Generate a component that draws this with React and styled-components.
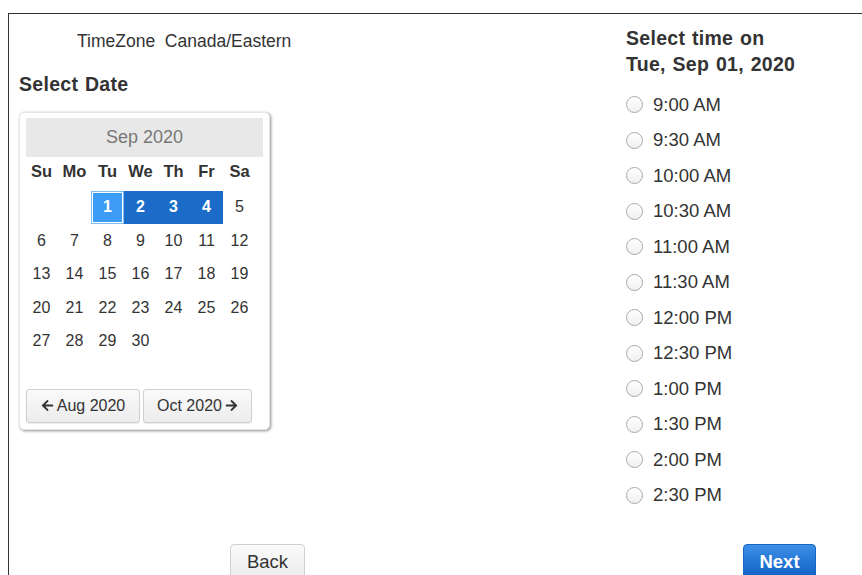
import React from 'react';
import styled, { createGlobalStyle } from 'styled-components';
import { FaArrowLeft, FaArrowRight } from 'react-icons/fa';

const GlobalStyle = createGlobalStyle`
  html, body {
    margin: 0;
    background: #fff;
    font-family: "Liberation Sans", Arial, sans-serif;
    color: #333;
  }
`;

const WEEKDAYS = ['Su', 'Mo', 'Tu', 'We', 'Th', 'Fr', 'Sa'];
const TIMES = [
  '9:00 AM', '9:30 AM', '10:00 AM', '10:30 AM', '11:00 AM', '11:30 AM',
  '12:00 PM', '12:30 PM', '1:00 PM', '1:30 PM', '2:00 PM', '2:30 PM',
];

// September 2020 starts on a Tuesday
const buildDays = () => {
  const cells = [null, null];
  for (let d = 1; d <= 30; d++) cells.push(d);
  return cells;
};

const App = () => {
  const days = buildDays();

  return (
    <>
      <GlobalStyle />
      <Frame>
        <Columns>
          <DateColumn>
            <TimeZone>TimeZone&nbsp;&nbsp;Canada/Eastern</TimeZone>
            <Heading>Select Date</Heading>
            <Calendar>
              <MonthBar>Sep 2020</MonthBar>
              <DayGrid>
                {WEEKDAYS.map(w => (
                  <WeekdayCell key={w}>{w}</WeekdayCell>
                ))}
                {days.map((d, i) => (
                  <DayCell
                    key={i}
                    current={d === 1}
                    available={d >= 2 && d <= 4}
                  >
                    {d}
                  </DayCell>
                ))}
              </DayGrid>
              <MonthNav>
                <NavButton>
                  <FaArrowLeft size={13} /> Aug 2020
                </NavButton>
                <NavButton>
                  Oct 2020 <FaArrowRight size={13} />
                </NavButton>
              </MonthNav>
            </Calendar>
          </DateColumn>

          <TimeColumn>
            <Heading tight>
              Select time on
              <br />
              Tue, Sep 01, 2020
            </Heading>
            <SlotList>
              {TIMES.map(t => (
                <Slot key={t}>
                  <Radio type="radio" name="slot" />
                  {t}
                </Slot>
              ))}
            </SlotList>
          </TimeColumn>
        </Columns>

        <Footer>
          <BackButton>Back</BackButton>
          <NextButton>Next</NextButton>
        </Footer>
      </Frame>
    </>
  );
};

const Frame = styled.div`
  margin: 13px 0 0 8px;
  border-top: 1px solid #333;
  border-left: 1px solid #333;
  height: 575px;
  box-sizing: border-box;
  overflow: hidden;
`;

const Columns = styled.div`
  display: flex;
  height: 517px;
`;

const DateColumn = styled.div`
  width: 608px;
  padding: 18px 0 0 10px;
  box-sizing: border-box;
`;

const TimeZone = styled.div`
  font-size: 17.5px;
  line-height: 18px;
  padding-left: 58px;
  color: #333;
`;

const Heading = styled.div`
  font-size: 19.5px;
  font-weight: bold;
  color: #333;
  letter-spacing: 0.3px;
  word-spacing: 1px;
  line-height: ${p => (p.tight ? '26px' : '20px')};
  margin-top: ${p => (p.tight ? '10px' : '24px')};
`;

const Calendar = styled.div`
  margin-top: 18px;
  width: 251px;
  height: 318px;
  box-sizing: border-box;
  padding: 5px 6px;
  background: #fff;
  border: 1px solid #e6e6e6;
  border-radius: 5px;
  box-shadow: 1px 1px 3px rgba(0, 0, 0, 0.45);
`;

const MonthBar = styled.div`
  height: 39px;
  background: #e8e8e8;
  color: #777;
  font-size: 18px;
  display: flex;
  align-items: center;
  justify-content: center;
`;

const DayGrid = styled.div`
  display: grid;
  grid-template-columns: repeat(7, 33px);
  grid-auto-rows: 33.5px;
  grid-template-rows: 33px;
  margin-left: -1px;
`;

const WeekdayCell = styled.div`
  display: flex;
  align-items: center;
  justify-content: center;
  font-size: 16.5px;
  font-weight: bold;
  color: #333;
  padding-bottom: 4px;
`;

const DayCell = styled.div`
  display: flex;
  align-items: center;
  justify-content: center;
  font-size: 16px;
  color: ${p => (p.current || p.available ? '#fff' : '#333')};
  font-weight: ${p => (p.current || p.available ? 'bold' : 'normal')};
  background: ${p =>
    p.current ? '#3d9cf5' : p.available ? '#1a6cc8' : 'transparent'};
  box-shadow: ${p =>
    p.current ? 'inset 0 0 0 1px #7fbdf5, inset 0 0 0 2px #fff' : 'none'};
  margin-top: 1px;
`;

const MonthNav = styled.div`
  display: flex;
  gap: 3px;
  margin-top: 31px;
`;

const NavButton = styled.button`
  height: 34px;
  padding: 0 10px;
  font-family: inherit;
  font-size: 16px;
  color: #333;
  border: 1px solid #cfcfcf;
  border-radius: 3px;
  background: linear-gradient(#fafafa, #ececec);
  box-shadow: 0 1px 1px rgba(0, 0, 0, 0.08);
  display: flex;
  align-items: center;
  justify-content: center;
  gap: 3px;
  &:first-child {
    width: 114px;
  }
  &:last-child {
    width: 109px;
  }
`;

const TimeColumn = styled.div`
  padding-left: 9px;
  padding-top: 1px;
`;

const SlotList = styled.div`
  display: flex;
  flex-direction: column;
  margin-top: 10px;
`;

const Slot = styled.label`
  display: flex;
  align-items: center;
  height: 35.5px;
  font-size: 18.5px;
  color: #333;
`;

const Radio = styled.input`
  appearance: none;
  width: 17px;
  height: 17px;
  margin: 0 10px 0 0;
  border: 1px solid #aaa;
  border-radius: 50%;
  background: linear-gradient(#fff, #f0f0f0);
`;

const Footer = styled.div`
  display: flex;
  align-items: flex-start;
  margin-top: 13px;
`;

const BaseButton = styled.button`
  height: 36px;
  font-family: inherit;
  font-size: 18.5px;
  border-radius: 4px;
  padding: 0;
`;

const BackButton = styled(BaseButton)`
  width: 75px;
  margin-left: 221px;
  color: #333;
  border: 1px solid #cfcfcf;
  background: linear-gradient(#fbfbfb, #ebebeb);
`;

const NextButton = styled(BaseButton)`
  width: 73px;
  margin-left: auto;
  margin-right: 46px;
  color: #fff;
  font-weight: bold;
  border: 1px solid #1866c4;
  background: linear-gradient(#3d8fe6, #0d5fc6);
`;

export default App;
